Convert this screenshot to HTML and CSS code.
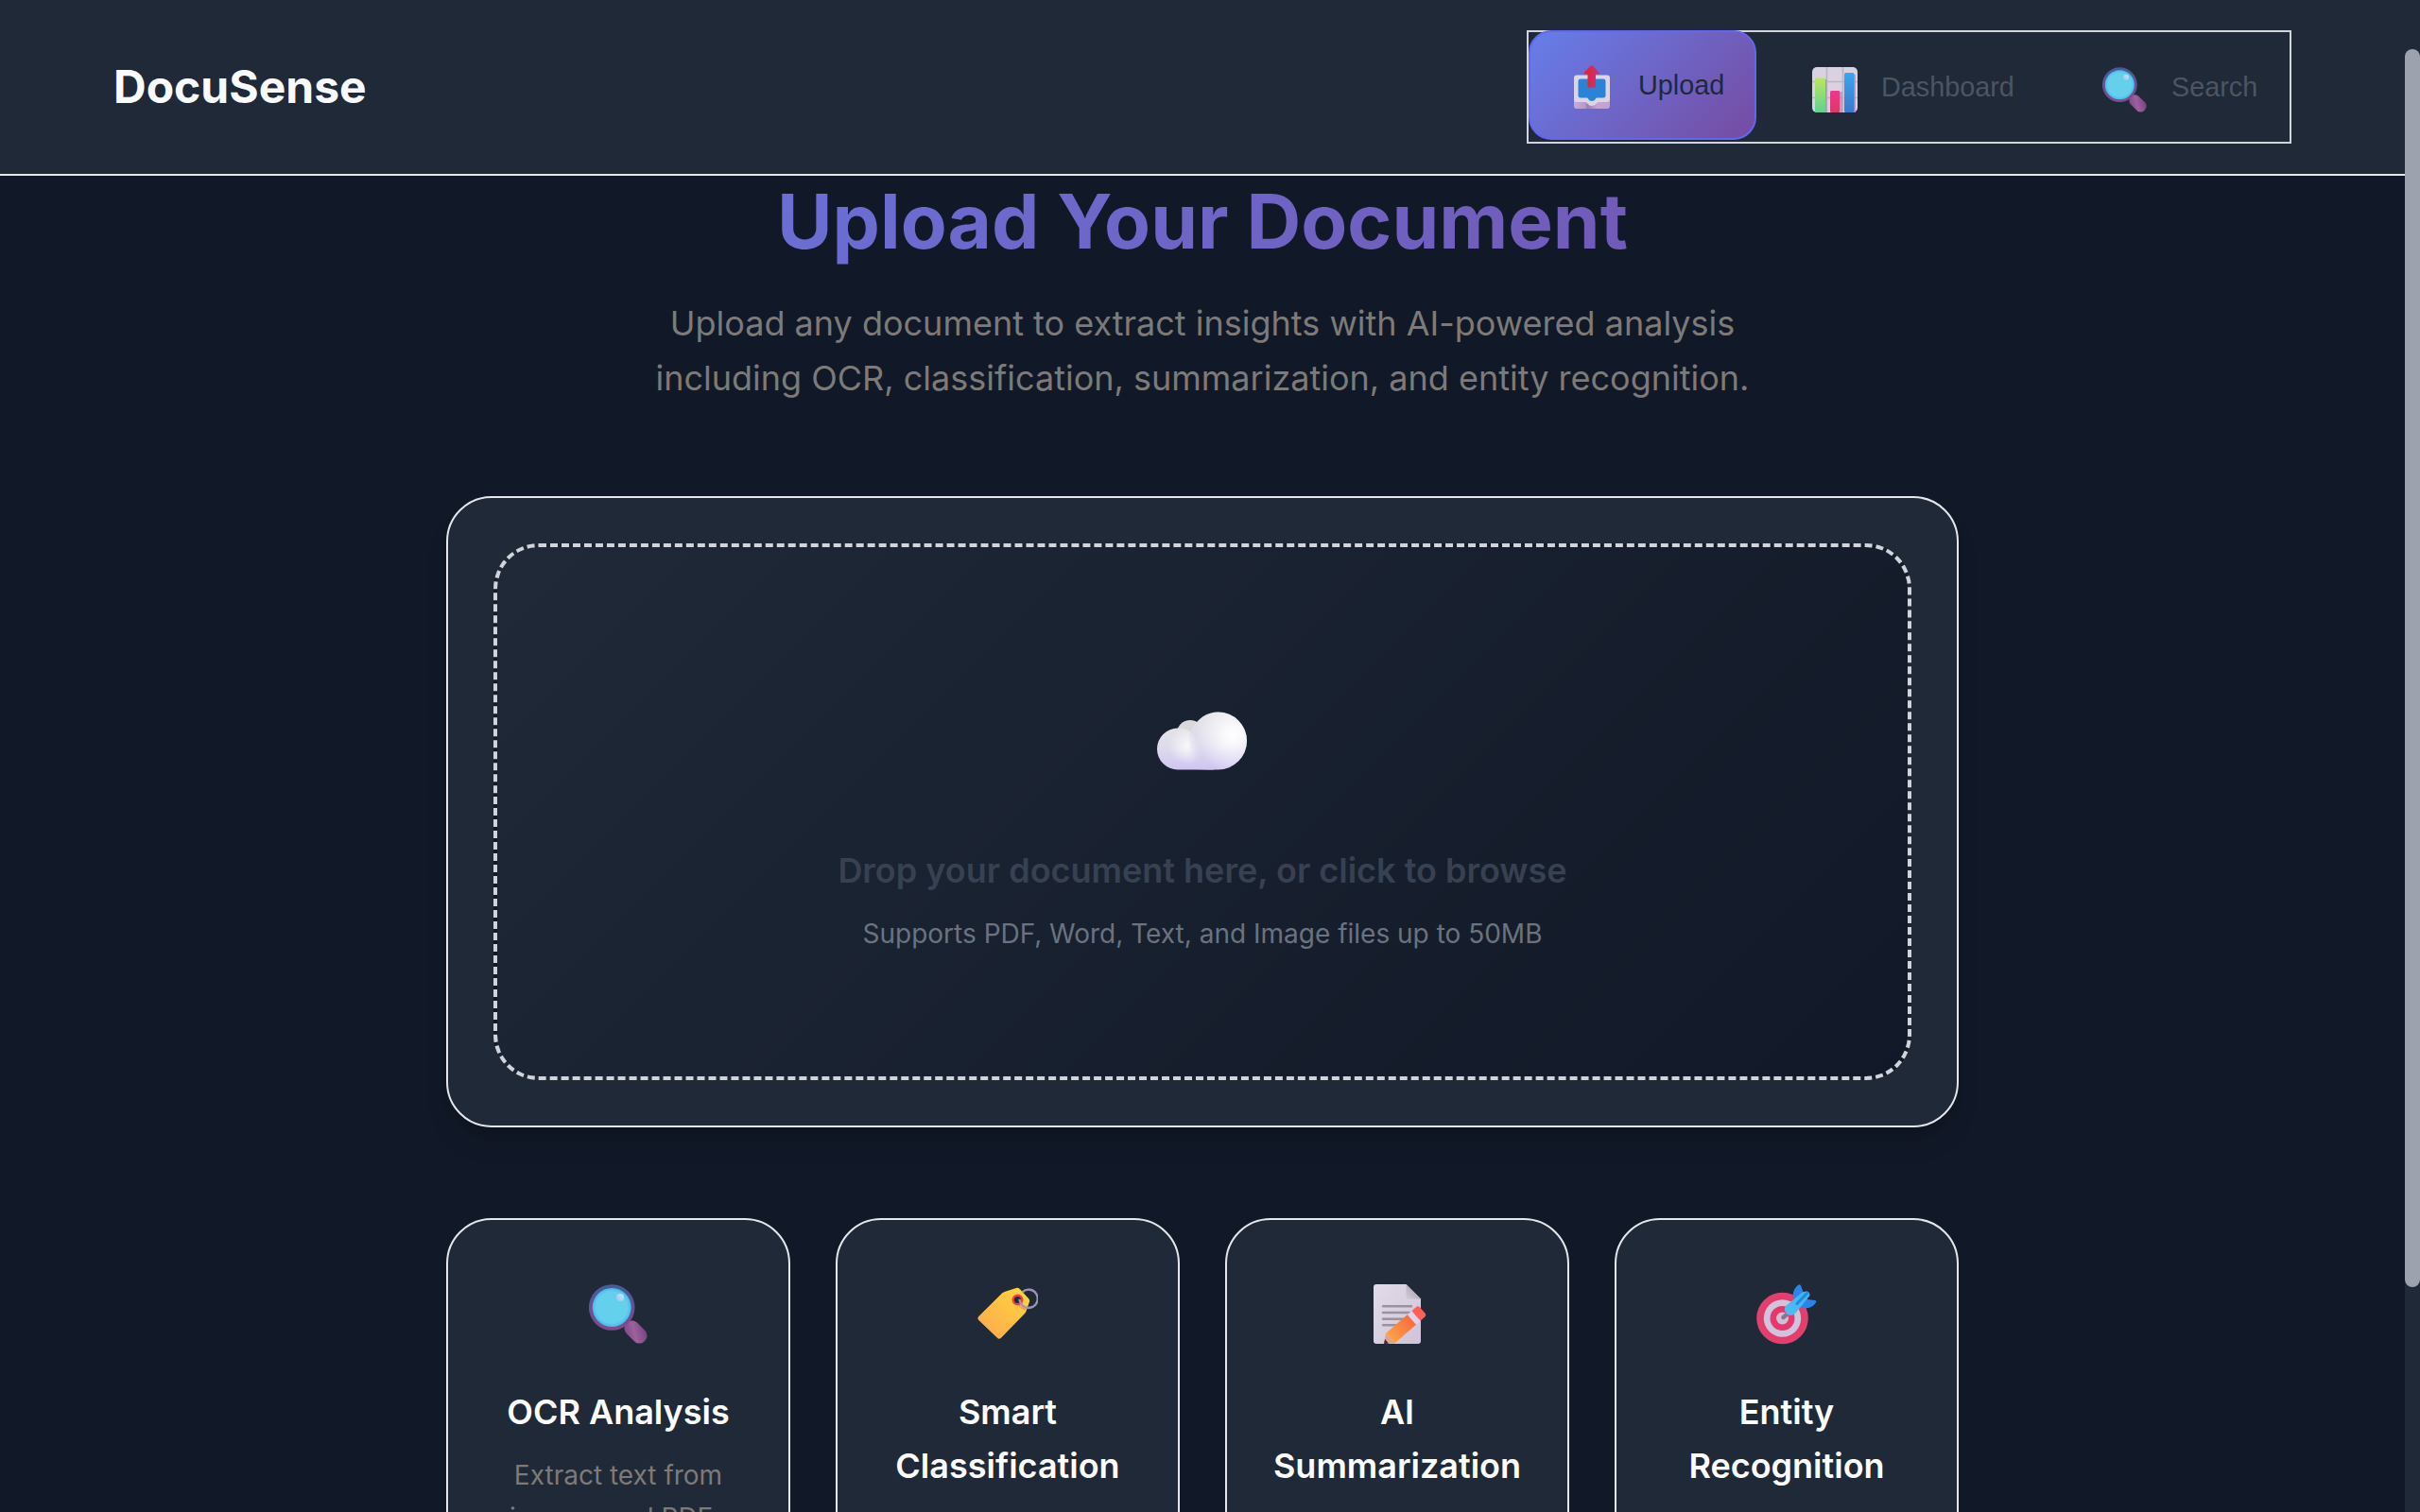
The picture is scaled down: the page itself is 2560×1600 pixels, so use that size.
FILE: index.html
```html
<!DOCTYPE html>
<html lang="en">
<head>
<meta charset="utf-8">
<title>DocuSense</title>
<link rel="stylesheet" href="styles.css">
</head>
<body>
<svg class="defs" width="0" height="0" aria-hidden="true">
  <defs>
    <linearGradient id="rim" x1="0" y1="0" x2="0" y2="1"><stop offset="0" stop-color="#435d9a"/><stop offset="1" stop-color="#834a8c"/></linearGradient>
    <radialGradient id="lens"><stop offset=".8" stop-color="#65d0ec"/><stop offset="1" stop-color="#4bb8ee"/></radialGradient>
    <linearGradient id="grip" x1="0" y1="1" x2="1" y2="0"><stop offset="0" stop-color="#7c4284"/><stop offset=".45" stop-color="#9c629c"/><stop offset="1" stop-color="#713a7b"/></linearGradient>
    <linearGradient id="glint" x1="0" y1="1" x2="1" y2="0"><stop offset="0" stop-color="#8fc9ee"/><stop offset="1" stop-color="#d5e2f8"/></linearGradient>
    <symbol id="magnifier" viewBox="0 0 62 63">
      <rect x="36" y="42.500" width="27" height="16" rx="7.500" transform="rotate(45 49.500 50.500)" fill="url(#grip)"/>
      <circle cx="24.200" cy="24.500" r="24.300" fill="url(#rim)"/>
      <circle cx="24.200" cy="24.500" r="20.500" fill="url(#lens)"/>
      <circle cx="33" cy="14" r="4" fill="url(#glint)"/>
    </symbol>
  </defs>
</svg>
<header class="header">
  <div class="logo">DocuSense</div>
  <nav class="nav">
    <a class="nav-item nav-item-active">
      <svg class="icon-outbox" viewBox="0 0 38 46">
        <defs><linearGradient id="arrow"><stop offset=".2" stop-color="#e0262f"/><stop offset="1" stop-color="#c4338a"/></linearGradient>
        <linearGradient id="tray"><stop offset="0" stop-color="#c3add6"/><stop offset=".3" stop-color="#b99ccb"/><stop offset=".38" stop-color="#9a80b4"/><stop offset=".65" stop-color="#c8a5d2"/><stop offset="1" stop-color="#bfa2d4"/></linearGradient></defs>
        <rect y="14" width="38" height="32" rx="3" fill="url(#tray)"/>
        <path d="M3 10.500h32a3 3 0 0 1 3 3V36a3 3 0 0 1-3 3H26c-2 0-3 4-7 4s-5-4-7-4H3a3 3 0 0 1-3-3V13.500a3 3 0 0 1 3-3z" fill="#dcd6e4"/>
        <path d="M7 14.500h24a2.500 2.500 0 0 1 2.500 2.500v15a2.500 2.500 0 0 1-2.500 2.500H24c-1 0-1.500 3.500-5 3.500s-4-3.500-5-3.500H7A2.500 2.500 0 0 1 4.500 32V17A2.500 2.500 0 0 1 7 14.500z" fill="#2c83d6"/>
        <path d="M14.500 23.500V9.500H12c-1.300 0-1.600-1-.9-1.900L17.400.8c.8-.9 2-.9 2.800 0l6.200 6.800c.8.9.4 1.900-.9 1.900H23v14z" fill="url(#arrow)"/>
      </svg>
      <span class="nav-label">Upload</span>
    </a>
    <a class="nav-item nav-item-chart">
      <svg class="icon-chart" viewBox="0 0 48 48">
        <defs><linearGradient id="gr" x1="0" y1="0" x2="0" y2="1"><stop offset="0" stop-color="#b8e85c"/><stop offset="1" stop-color="#5fd293"/></linearGradient>
        <linearGradient id="pk" x1="0" y1="0" x2="0" y2="1"><stop offset="0" stop-color="#ed3694"/><stop offset="1" stop-color="#e03763"/></linearGradient>
        <linearGradient id="bl" x1="0" y1="0" x2="0" y2="1"><stop offset="0" stop-color="#38a5f4"/><stop offset="1" stop-color="#3d78cc"/></linearGradient></defs>
        <rect width="48" height="48" rx="5" fill="#d9d2e0"/>
        <path d="M15.500 0v48M32.500 0v48M0 15.500h48M0 32.500h48" stroke="#bbb4c3" stroke-width="1.600"/>
        <path d="M14.500 13v35M31 26v22M45 8v40" stroke="#a995b8" stroke-width="1.500"/>
        <rect x="3" y="11.500" width="11" height="36.500" rx="1.500" fill="url(#gr)"/>
        <rect x="19" y="25" width="10.500" height="23" rx="1.500" fill="url(#pk)"/>
        <rect x="34" y="6" width="10.500" height="42" rx="1.500" fill="url(#bl)"/>
      </svg>
      <span class="nav-label">Dashboard</span>
    </a>
    <a class="nav-item nav-item-search">
      <svg class="icon-search"><use href="#magnifier"/></svg>
      <span class="nav-label">Search</span>
    </a>
  </nav>
</header>

<main class="main">
  <h1 class="title">Upload Your Document</h1>
  <p class="subtitle">Upload any document to extract insights with AI-powered analysis<br>including OCR, classification, summarization, and entity recognition.</p>

  <section class="upload-card">
    <div class="dropzone">
      <svg class="icon-cloud" viewBox="0 0 95 62">
        <defs>
          <linearGradient id="cl" x1="0" y1="0" x2="0" y2="1"><stop offset="0" stop-color="#e3e2e6"/><stop offset=".5" stop-color="#dedaec"/><stop offset="1" stop-color="#cfc5f2"/></linearGradient>
          <radialGradient id="shineBig" gradientUnits="userSpaceOnUse" cx="80" cy="25" r="40"><stop offset="0" stop-color="#fff"/><stop offset=".25" stop-color="#fff" stop-opacity=".8"/><stop offset="1" stop-color="#fff" stop-opacity="0"/></radialGradient>
          <radialGradient id="shineSmall" gradientUnits="userSpaceOnUse" cx="32" cy="36" r="20"><stop offset="0" stop-color="#fff" stop-opacity=".8"/><stop offset="1" stop-color="#fff" stop-opacity="0"/></radialGradient>
          <linearGradient id="lobeFade" gradientUnits="userSpaceOnUse" x1="33" y1="36" x2="45" y2="32"><stop offset="0" stop-color="#fff" stop-opacity="0"/><stop offset="1" stop-color="#fff"/></linearGradient>
          <mask id="lobeMask" maskUnits="userSpaceOnUse" x="0" y="0" width="95" height="62"><path d="M0 0h95v62H0z" fill="url(#lobeFade)"/><path d="M40 0h55v20H36z" fill="#fff"/></mask>
        </defs>
        <circle cx="35" cy="23" r="14" fill="#dad9da"/>
        <path d="M22 17.500A22 22 0 0 0 22 61.500H60V32H43C39 22 32 17.500 22 17.500z" fill="url(#cl)"/>
        <path d="M22 17.500A22 22 0 0 0 22 61.500H60V32H43C39 22 32 17.500 22 17.500z" fill="url(#shineSmall)"/>
        <g mask="url(#lobeMask)">
          <path d="M64.500.500a30.300 30.300 0 0 1 0 61H34V25L38 17A30 30 0 0 1 64.500.500z" fill="url(#cl)"/>
          <path d="M64.500.500a30.300 30.300 0 0 1 0 61H34V25L38 17A30 30 0 0 1 64.500.500z" fill="url(#shineBig)"/>
        </g>
      </svg>
      <h3 class="drop-title">Drop your document here, or click to browse</h3>
      <p class="drop-hint">Supports PDF, Word, Text, and Image files up to 50MB</p>
    </div>
  </section>

  <section class="features">
    <article class="feature">
      <div class="feature-icon"><svg class="icon-mag" width="62" height="63"><use href="#magnifier"/></svg></div>
      <h4 class="feature-title">OCR Analysis</h4>
      <p class="feature-text">Extract text from images and PDFs</p>
    </article>
    <article class="feature">
      <div class="feature-icon">
        <svg width="64" height="64" viewBox="0 0 64 64">
          <defs><linearGradient id="tag" x1="0" y1="1" x2="1" y2="0"><stop offset=".2" stop-color="#ffb04b"/><stop offset="1" stop-color="#ffd83e"/></linearGradient></defs>
          <path d="M28.500 8 41 4q2-.8 3.500.8L54 15q1.500 1.500 1 3.500l-3.500 10Q51 30 50 31L25 56.800q-2 2-4 0L1.300 38q-1.800-2 0-4L26 9.500q1-1 2.500-1.500z" fill="url(#tag)"/>
          <path d="M43 19.500a10 10 0 0 0 8 7" fill="none" stroke="#efa24a" stroke-width="2"/>
          <circle cx="42.500" cy="16.500" r="4.800" fill="#202a38" stroke="#ee4149" stroke-width="2.400"/>
          <path d="M47.500 8.300a9.600 9.600 0 1 1-3 7.500" fill="none" stroke="#a193b4" stroke-width="2.400"/>
        </svg>
      </div>
      <h4 class="feature-title">Smart Classification</h4>
      <p class="feature-text">Automatically categorize documents</p>
    </article>
    <article class="feature">
      <div class="feature-icon icon-memo">
        <svg width="64" height="64" viewBox="0 0 64 64">
          <defs><linearGradient id="page" x1="0" y1="0" x2="1" y2="1"><stop offset="0" stop-color="#e2dbe8"/><stop offset="1" stop-color="#cfc4d8"/></linearGradient>
          <linearGradient id="fold" x1="0" y1="1" x2="1" y2="0"><stop offset="0" stop-color="#d2cbd8"/><stop offset="1" stop-color="#9f98a6"/></linearGradient>
          <linearGradient id="pencil"><stop offset="0" stop-color="#ffa044"/><stop offset="1" stop-color="#f96b3d"/></linearGradient>
          <clipPath id="pageClip"><path d="M0 0h64v63H0z"/></clipPath></defs>
          <path d="M3 0h31.500L50 15.500V60a3 3 0 0 1-3 3H3a3 3 0 0 1-3-3V3a3 3 0 0 1 3-3z" fill="url(#page)"/>
          <path d="M34.500 0 50 15.500H36.500a2 2 0 0 1-2-2z" fill="url(#fold)"/>
          <path d="M10 23.300h30M10 30h28M10 36.700h24M10 43.300h16" stroke="#99929f" stroke-width="2.400" stroke-linecap="round"/>
          <g clip-path="url(#pageClip)"><g transform="translate(11 63) rotate(-41)">
            <path d="M0 0 9-7v14z" fill="#dca68c"/>
            <path d="M0 0 4-3v6z" fill="#4a2148"/>
            <path d="M9-7h31V7H9z" fill="url(#pencil)"/>
            <path d="M39-7h7V7h-7z" fill="#ddd5ee"/>
            <path d="M45-7h6q3 0 3 3v8q0 3-3 3h-6z" fill="#fd6156"/>
          </g></g>
        </svg>
      </div>
      <h4 class="feature-title">AI Summarization</h4>
      <p class="feature-text">Generate intelligent summaries</p>
    </article>
    <article class="feature">
      <div class="feature-icon">
        <svg width="64" height="64" viewBox="0 0 64 64">
          <defs><linearGradient id="dart" x1="0" y1="1" x2="1" y2="0"><stop offset="0" stop-color="#51bdf0"/><stop offset="1" stop-color="#3bb5f0"/></linearGradient>
          <radialGradient id="ring"><stop offset=".8" stop-color="#e63c6c"/><stop offset="1" stop-color="#dc4472"/></radialGradient></defs>
          <circle cx="27.500" cy="36" r="27.300" fill="url(#ring)"/>
          <circle cx="27.500" cy="36" r="19.700" fill="#d0c3de"/>
          <circle cx="27.500" cy="36" r="13" fill="#e8376a"/>
          <circle cx="27.500" cy="36" r="6.500" fill="#d0bfd6"/>
          <path d="M28.500 35 36 29" stroke="#8c7294" stroke-width="4.500" stroke-linecap="round"/>
          <path d="M39 14C38 8 41 3 44.500.800Q46-.500 47 1.500L49.500 8H54v8l8 1q2 .500 1 2.500C60 24 55 26 49 25z" fill="#2a84ea"/>
          <path d="M31 23 48 9q3-2 5.500-1.500 3 .5 3 4.500l-15 18.500c-3 3-7 3-9.500.5s-3-5-1-8z" fill="url(#dart)"/>
          <path d="M43 20.500 53.500 9.500" stroke="#2287e0" stroke-width="3" stroke-linecap="round"/>
        </svg>
      </div>
      <h4 class="feature-title">Entity Recognition</h4>
      <p class="feature-text">Identify key entities</p>
    </article>
  </section>
</main>
<div class="scrollbar"><div class="scrollbar-thumb"></div></div>
</body>
</html>
```
FILE: styles.css
```css
* { box-sizing: border-box; }

body {
  margin: 0;
  height: 1600px;
  overflow: hidden;
  background: #111827;
  font-family: Inter, sans-serif;
}

h1, h3, h4, p { margin: 0; }
.defs { position: absolute; }

.header {
  display: flex;
  align-items: center;
  justify-content: space-between;
  width: 2544px;
  height: 186px;
  padding: 0 120px;
  background: #1f2937;
  border-bottom: 2px solid #e5e7eb;
}

.logo {
  padding-bottom: 2px;
  color: #f9fafb;
  font-size: 48px;
  font-weight: 700;
}

.nav {
  display: flex;
  width: 809px;
  height: 120px;
  border: 2px solid #d1d5db;
  font-family: "Liberation Sans", Arial, sans-serif;
  font-size: 28.8px;
  color: #4b5563;
}

.nav-item {
  display: flex;
  align-items: center;
  height: 116px;
}

.nav-item-active {
  width: 241px;
  padding-left: 46px;
  gap: 30px;
  color: #1f2937;
  background: linear-gradient(135deg, #667eea 0%, #764ba2 100%);
  border: 2px solid #6366f1;
  border-radius: 24px;
  transform: translateY(-2px);
}

.nav-item-chart { width: 307px; padding-left: 59px; gap: 25px; }
.nav-item-search { padding-left: 59px; gap: 26px; }
.icon-outbox { width: 38px; height: 46px; margin-top: 4px; }
.icon-chart { width: 48px; height: 48px; margin-top: 6px; }
.icon-search { width: 47px; height: 48px; margin-top: 6px; }

.main {
  display: flex;
  flex-direction: column;
  align-items: center;
  width: 2544px;
}

.title {
  width: 2304px;
  font-size: 80px;
  line-height: 96px;
  font-weight: 700;
  text-align: center;
  background: linear-gradient(135deg, #667eea 0%, #764ba2 100%);
  background-clip: text;
  -webkit-background-clip: text;
  color: transparent;
}

.subtitle {
  margin-top: 32px;
  color: #7d7a77;
  font-size: 36px;
  line-height: 57.6px;
  text-align: center;
}

.upload-card {
  width: 1600px;
  height: 668px;
  margin-top: 96px;
  padding: 48px;
  background: #1f2937;
  border: 2px solid #e5e7eb;
  border-radius: 48px;
  box-shadow: 0 20px 30px -6px rgba(0, 0, 0, 0.1), 0 8px 12px -4px rgba(0, 0, 0, 0.1);
}

.dropzone {
  display: flex;
  flex-direction: column;
  align-items: center;
  height: 568px;
  padding-top: 174px;
  background: linear-gradient(135deg, #1f2937 0%, #111827 100%);
  border: 4px dashed #d1d5db;
  border-radius: 48px;
}

.icon-cloud { width: 95px; height: 62px; margin-right: 1px; }

.drop-title {
  margin-top: 77px;
  color: #374151;
  font-size: 36px;
  line-height: 58px;
  font-weight: 600;
}

.drop-hint {
  margin-top: 16px;
  color: #6b7280;
  font-size: 28px;
  line-height: 45px;
}

.features {
  display: grid;
  grid-template-columns: repeat(4, 364px);
  gap: 48px;
  margin-top: 96px;
}

.feature {
  display: flex;
  flex-direction: column;
  align-items: center;
  height: 460px;
  padding: 68px 46px 0;
  background: #1f2937;
  border: 2px solid #e5e7eb;
  border-radius: 48px;
  text-align: center;
}

.feature-icon { height: 64px; }
.icon-memo { padding-left: 14px; }

.feature-title {
  margin-top: 43px;
  color: #ffffff;
  font-size: 36px;
  line-height: 57px;
  font-weight: 600;
}

.feature-text {
  margin-top: 16px;
  color: #7d7a77;
  font-size: 28px;
  line-height: 44.8px;
}

.scrollbar {
  position: absolute;
  top: 0;
  left: 2544px;
  width: 16px;
  height: 1600px;
  padding-top: 52px;
  background: #1f2937;
}

.scrollbar-thumb {
  height: 1310px;
  background: #9ca3af;
  border-radius: 8px;
}
```
